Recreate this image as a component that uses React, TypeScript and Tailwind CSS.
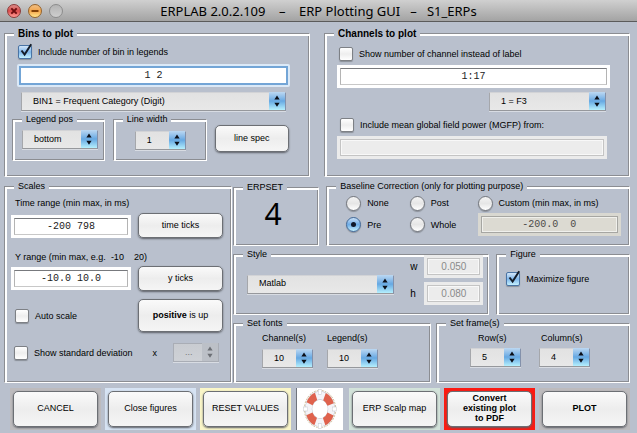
import type { InputHTMLAttributes, ReactNode } from "react";

const SANS = "font-['Liberation_Sans',Arial,sans-serif]";
const MONO = "font-['Liberation_Mono','Courier_New',monospace]";

function Panel({
  title,
  bold = false,
  className = "",
  children,
}: {
  title: string;
  bold?: boolean;
  className?: string;
  children: ReactNode;
}) {
  return (
    <fieldset
      className={`min-w-0 border border-t-[#8b8d92] border-l-[#8b8d92] border-r-white border-b-white shadow-[inset_2px_2px_0_#fff,inset_-1px_-1px_0_#8b8d92] ${className}`}
    >
      <legend className={`ml-[9px] bg-[#b9c0cd] px-1 leading-[13px] ${bold ? "text-[10px] font-bold" : ""}`}>
        {title}
      </legend>
      {children}
    </fieldset>
  );
}

function CheckBox({ label, checked = false }: { label: string; checked?: boolean }) {
  return (
    <label className="flex h-4 items-center gap-1.5 whitespace-nowrap">
      <span className="relative h-3.5 w-3.5 shrink-0">
        <input
          type="checkbox"
          defaultChecked={checked}
          className="peer block h-3.5 w-3.5 appearance-none rounded-[2px] border border-[#7d8085] bg-linear-to-b from-white via-[#eeeeee] to-white shadow-[0_1px_1px_#8a8f98] checked:border-[#4a74a5] checked:from-[#d3e6f9] checked:via-[#7fb6ea] checked:to-[#c4f0fd]"
        />
        <svg
          viewBox="0 0 16 16"
          className="pointer-events-none absolute -top-0.5 left-0 hidden h-4 w-4 peer-checked:block"
          aria-hidden="true"
        >
          <path d="M3.5 7.5 L6.6 11.5 L13.2 1.2" fill="none" stroke="#141c28" strokeWidth="2" />
        </svg>
      </span>
      {label}
    </label>
  );
}

function Radio({ label, checked = false }: { label: string; checked?: boolean }) {
  return (
    <label className="flex h-4 items-center gap-1.5 whitespace-nowrap">
      <span className="relative h-[15px] w-[15px] shrink-0">
        <input
          type="radio"
          name="baseline"
          defaultChecked={checked}
          className="peer block h-[15px] w-[15px] appearance-none rounded-full border border-[#74777d] bg-linear-to-b from-[#f4f4f4] via-[#e6e6e6] to-white shadow-[0_1px_1px_#8a8f98] checked:border-[#3f6797] checked:from-[#c9e0f7] checked:via-[#6dabe6] checked:to-[#c4f0fd]"
        />
        <span className="pointer-events-none absolute top-[5px] left-[5px] hidden h-[5px] w-[5px] rounded-full bg-[#10182a] peer-checked:block" />
      </span>
      {label}
    </label>
  );
}

function Select({
  value,
  label,
  className = "",
  disabled = false,
}: {
  value: string;
  label: string;
  className?: string;
  disabled?: boolean;
}) {
  return (
    <span className={`relative block h-[19px] ${className}`}>
      <select
        aria-label={label}
        disabled={disabled}
        className="block h-full w-full appearance-none border border-t-[#d2d3d6] border-r-[#8391ab] border-b-[#96989c] border-l-[#a5a7ab] bg-linear-to-b from-[#e2e2e2] to-[#e8e8e8] pb-0.5 pl-[11px] text-black shadow-[0_1px_0_#d8dce3] disabled:border-[#a9adb5] disabled:from-[#c9ccd1] disabled:to-[#ced1d6] disabled:text-[#777] disabled:opacity-100"
      >
        <option>{value}</option>
      </select>
      <svg
        viewBox="0 0 17 18"
        aria-hidden="true"
        className={`pointer-events-none absolute top-0 right-px h-[18px] w-4 ${
          disabled
            ? "bg-[#bcc0c7] text-[#6c6f75]"
            : "bg-linear-to-b from-[#bcd8f2] via-[#66a8e2] to-[#b5f0fd] text-[#0b0f18]"
        }`}
      >
        <path d="M8.5 3.2 L11.3 7.4 H5.7 Z M8.5 15 L5.7 10.8 H11.3 Z" fill="currentColor" />
      </svg>
    </span>
  );
}

function TextBox({
  tone = "normal",
  className = "",
  ...rest
}: { tone?: "normal" | "focus" | "off" | "beige" } & InputHTMLAttributes<HTMLInputElement>) {
  const frame = {
    normal: "bg-white p-[3px]",
    focus: "rounded-[2px] bg-[#dbe9f7] p-0.5",
    off: "bg-[#ebebeb] p-[3px]",
    beige: "bg-[#d9d8d1] p-[3px]",
  }[tone];
  const field = {
    normal: "border border-t-[#77797d] border-x-[#b4b4b4] border-b-[#c8c8c8] bg-white text-[#222]",
    focus: "border-2 border-[#73a5d6] bg-white text-[#222]",
    off: "border border-[#c4c4c4] bg-[#ececec] text-[#8a8a8a] shadow-[inset_0_0_0_1px_#f8f8f8]",
    beige: "border border-[#a6a6a2] bg-[#dcdad2] text-[#4c4b48] shadow-[inset_0_0_0_1px_#f0f0ec]",
  }[tone];
  return (
    <span className={`block h-[23px] text-[10px] ${frame} ${className}`}>
      <input {...rest} className={`block h-full w-full text-center outline-none ${field}`} />
    </span>
  );
}

function PushButton({ className = "", children }: { className?: string; children: ReactNode }) {
  return (
    <button
      type="button"
      className={`rounded-[5px] border border-[#6c6f74] bg-linear-to-b from-[#fafafa] via-[#ededed] to-[#f5f5f5] pb-0.5 leading-[10px] shadow-[0_1px_2px_#5d6067] ${className}`}
    >
      {children}
    </button>
  );
}

function Action({ halo, bold = false, children }: { halo: string; bold?: boolean; children: ReactNode }) {
  return (
    <span className={`flex h-[42px] min-w-0 flex-1 p-[3px] ${halo}`}>
      <PushButton className={`w-full ${bold ? "font-bold" : ""}`}>{children}</PushButton>
    </span>
  );
}

function Lifebuoy() {
  return (
    <svg viewBox="0 0 46 42" className="h-[42px] w-[46px]" aria-hidden="true">
      <g transform="translate(23 21) scale(0.84 1)">
        <circle r="18.6" fill="none" stroke="#c4ad80" strokeWidth="0.9" strokeDasharray="2 1.2" />
        <circle r="13.5" fill="none" stroke="#b9bcc6" strokeWidth="8.4" />
        <circle r="13.5" fill="none" stroke="#f4f4f8" strokeWidth="7.4" />
        <circle
          r="13.5"
          fill="none"
          stroke="#df624d"
          strokeWidth="7.8"
          strokeDasharray="11 10.206"
          transform="rotate(21.65)"
        />
        <g fill="#fff" stroke="#c9cbd2" strokeWidth="0.6">
          <rect x="-2" y="-19.6" width="4" height="5" />
          <rect x="-2" y="14.6" width="4" height="5" />
          <rect x="-19.6" y="-2" width="5" height="4" />
          <rect x="14.6" y="-2" width="5" height="4" />
        </g>
      </g>
    </svg>
  );
}

function TitleBar() {
  return (
    <header className="relative flex h-[22px] items-center justify-center border-b border-[#5b5b5b] bg-linear-to-b from-[#d0d0d0] to-[#a3a3a3]">
      <div className="absolute left-[7px] flex gap-[7px]">
        <button type="button" aria-label="Close" className="h-3.5 w-3.5 rounded-full border border-[#8d3a38] bg-linear-to-b from-[#d98a88] via-[#dc4a4b] to-[#ff9c98]">
          <svg viewBox="0 0 12 12" className="h-3 w-3">
            <path d="M3.3 3.3 L8.7 8.7 M8.7 3.3 L3.3 8.7" stroke="#6e0d10" strokeWidth="1.9" />
          </svg>
        </button>
        <button type="button" aria-label="Minimize" className="h-3.5 w-3.5 rounded-full border border-[#96632c] bg-linear-to-b from-[#f0bd80] via-[#f3a54a] to-[#ffe88c]">
          <svg viewBox="0 0 12 12" className="h-3 w-3">
            <path d="M2.5 6 H9.5" stroke="#7c3d06" strokeWidth="1.9" />
          </svg>
        </button>
        <button type="button" aria-label="Zoom" disabled className="h-3.5 w-3.5 rounded-full border border-[#8c8c8c] bg-linear-to-b from-[#b4b4b4] to-[#cecece]" />
      </div>
      <h1 className="font-['Noto_Sans','Open_Sans',sans-serif] text-[13px] leading-5 whitespace-pre text-black">
        {"ERPLAB 2.0.2.109    –    ERP Plotting GUI   –   S1_ERPs"}
      </h1>
    </header>
  );
}

export default function App() {
  return (
    <div className={`min-h-screen bg-[#b9c0cd] text-[9px] leading-3 text-black ${SANS}`}>
      <TitleBar />
      <main className="flex flex-col gap-[3px] pt-[5px] pr-[7px] pb-[3px] pl-1">
        <div className="flex gap-3.5">
          <Panel title="Bins to plot" bold className="h-[150px] flex-1">
            <div className="pt-1 pr-[19px] pl-3">
              <div className="pl-px">
                <CheckBox label="Include number of bin in legends" checked />
              </div>
              <TextBox tone="focus" aria-label="Bins" defaultValue="1 2" className={`mt-1 ${MONO}`} />
            </div>
            <div className="mt-[5px] pr-[23px] pl-4">
              <Select label="Bin" value="BIN1 = Frequent Category (Digit)" />
            </div>
            <div className="flex gap-2 pt-0.5 pr-5 pl-[7px]">
              <Panel title="Legend pos" className="h-12 flex-[93]">
                <Select label="Legend position" value="bottom" className="mt-1 mr-1.5 ml-[9px]" />
              </Panel>
              <Panel title="Line width" className="h-12 flex-[94]">
                <Select label="Line width" value="1" className="mt-[5px] ml-[21px] w-[51px]" />
              </Panel>
              <PushButton className="mt-3 h-[27px] flex-[74]">line spec</PushButton>
            </div>
          </Panel>

          <Panel title="Channels to plot" bold className="h-[150px] flex-1">
            <div className="pt-1.5 pr-[19px] pl-3">
              <div className="pl-0.5">
                <CheckBox label="Show number of channel instead of label" />
              </div>
              <TextBox aria-label="Channels" defaultValue="1:17" className={`mt-[3px] ${MONO}`} />
              <div className="mt-1 flex justify-end pr-1">
                <Select label="Channel" value="1 = F3" className="w-[117px]" />
              </div>
              <div className="mt-1.5 pl-[3px]">
                <CheckBox label="Include mean global field power (MGFP) from:" />
              </div>
              <TextBox tone="off" aria-label="MGFP channels" disabled className="mt-[3px] mr-[3px]" />
            </div>
          </Panel>
        </div>

        <div className="grid grid-cols-[228fr_397fr] gap-px">
          <Panel title="Scales">
            <div className="grid grid-cols-[120fr_85fr] items-center gap-x-[7px] pr-2 pl-1.5">
              <label htmlFor="time" className="col-span-2 mt-1 h-4 pl-1 leading-3">
                Time range (min max, in ms)
              </label>
              <span className="mt-px">
                <TextBox id="time" defaultValue="-200 798" className={MONO} />
              </span>
              <PushButton className="h-[25px]">time ticks</PushButton>
              <label htmlFor="yrange" className="col-span-2 mt-[13px] h-[15px] pl-1 whitespace-pre">
                {"Y range (min max, e.g.  -10    20)"}
              </label>
              <TextBox id="yrange" defaultValue="-10.0 10.0" className={MONO} />
              <PushButton className="h-[25px]">y ticks</PushButton>
              <div className="mt-2 pl-1">
                <CheckBox label="Auto scale" />
              </div>
              <PushButton className="mt-2 h-[33px]">
                <b>positive</b> is up
              </PushButton>
            </div>
            <div className="mt-[11px] flex items-center justify-between pr-3 pl-[9px]">
              <CheckBox label="Show standard deviation" />
              <span className="flex items-center gap-4">
                x
                <Select label="Standard deviation factor" value="..." disabled className="w-[46px]" />
              </span>
            </div>
          </Panel>

          <div className="flex flex-col gap-0.5">
            <div className="flex gap-[7px]">
              <Panel title="ERPSET" className="mt-px flex-[85]">
                <div className="pt-1 pr-1.5 text-center font-['Noto_Sans',sans-serif] text-[30px] leading-8">4</div>
              </Panel>
              <Panel title="Baseline Correction (only for plotting purpose)" className="h-[66px] flex-[305]">
                <div className="grid grid-cols-[64fr_68fr_144fr] items-center gap-y-0.5 pt-0.5 pr-2 pl-[19px]">
                  <Radio label="None" />
                  <Radio label="Post" />
                  <Radio label="Custom (min max, in ms)" />
                  <Radio label="Pre" checked />
                  <Radio label="Whole" />
                  <TextBox tone="beige" aria-label="Custom baseline" defaultValue="-200.0  0" className={MONO} />
                </div>
              </Panel>
            </div>

            <div className="flex h-[67px] gap-[7px]">
              <Panel title="Style" className="flex-[257]">
                <div className="-mt-1.5 flex items-center pr-[5px] pl-[13px]">
                  <Select label="Style" value="Matlab" className="mt-2 flex-1" />
                  <div className="ml-4 flex flex-col gap-1 text-[10px]">
                    <label className="flex items-center gap-1.5">
                      <span className="w-2">w</span>
                      <TextBox tone="off" disabled defaultValue="0.050" className="w-[59px]" />
                    </label>
                    <label className="flex items-center gap-1.5">
                      <span className="w-2">h</span>
                      <TextBox tone="off" disabled defaultValue="0.080" className="w-[59px]" />
                    </label>
                  </div>
                </div>
              </Panel>
              <Panel title="Figure" className="flex-[133]">
                <div className="pt-2.5 pl-[9px]">
                  <CheckBox label="Maximize figure" checked />
                </div>
              </Panel>
            </div>

            <div className="flex h-[66px] gap-[5px]">
              <Panel title="Set fonts" className="flex-[198]">
                <div className="flex gap-3.5 pt-0.5 pl-7">
                  <div className="w-[51px]">
                    <div className="h-[17px]">Channel(s)</div>
                    <Select label="Channel font size" value="10" />
                  </div>
                  <div className="w-[51px]">
                    <div className="h-[17px]">Legend(s)</div>
                    <Select label="Legend font size" value="10" />
                  </div>
                </div>
              </Panel>
              <Panel title="Set frame(s)" className="flex-[194]">
                <div className="flex gap-[18px] pt-0.5 pl-[33px]">
                  <div className="w-[51px]">
                    <div className="h-4 pl-2">Row(s)</div>
                    <Select label="Rows" value="5" />
                  </div>
                  <div className="w-[51px]">
                    <div className="h-4 pl-0.5">Column(s)</div>
                    <Select label="Columns" value="4" />
                  </div>
                </div>
              </Panel>
            </div>
          </div>
        </div>

        <footer className="mt-0.5 flex gap-1 pl-1.5">
          <Action halo="bg-[#bdbbbd]">CANCEL</Action>
          <Action halo="bg-[#d6e3f3]">Close figures</Action>
          <Action halo="bg-[#faf6c8]">RESET VALUES</Action>
          <button type="button" aria-label="Help" className="mx-0.5 h-[42px] w-[46px] bg-white shadow-[-1px_0_0_#70747c]">
            <Lifebuoy />
          </button>
          <Action halo="bg-[#d3e3da]">ERP Scalp map</Action>
          <Action halo="bg-[#fb1a12]" bold>
            Convert
            <br />
            existing plot
            <br />
            to PDF
          </Action>
          <Action halo="bg-[#bdbbbd]" bold>
            PLOT
          </Action>
        </footer>
      </main>
    </div>
  );
}
